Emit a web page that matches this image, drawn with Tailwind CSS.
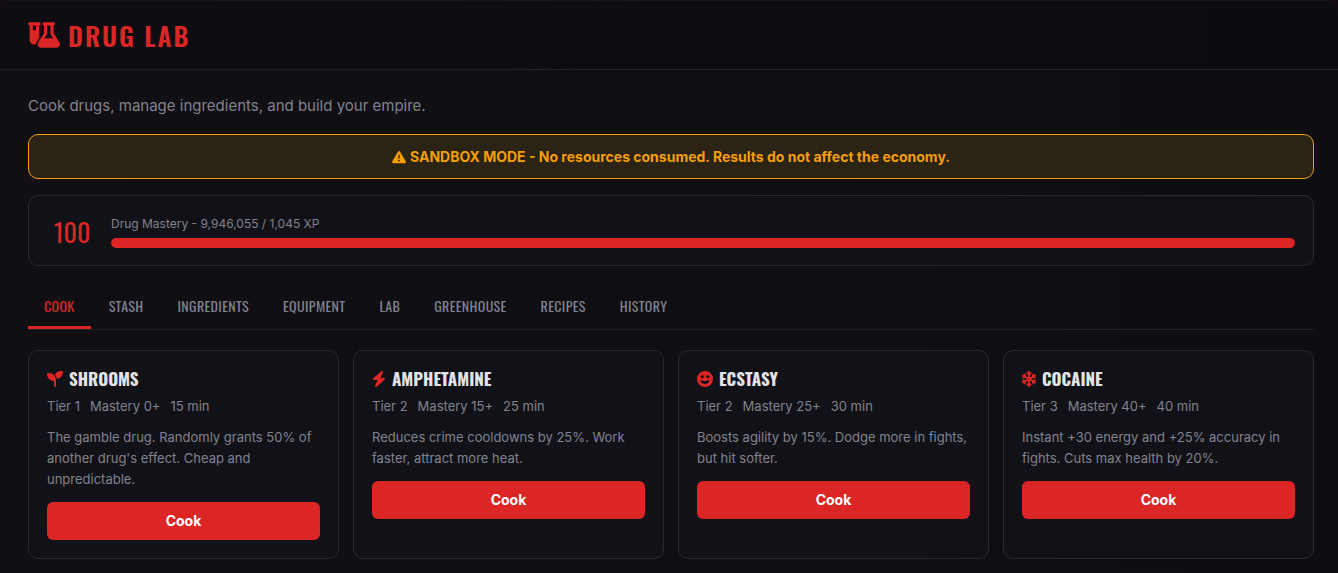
<!DOCTYPE html>
<html lang="en">
<head>
<meta charset="utf-8">
<meta name="viewport" content="width=device-width, initial-scale=1">
<title>Drug Lab</title>
<script src="https://cdn.jsdelivr.net/npm/@tailwindcss/browser@4"></script>
</head>
<body class="min-h-screen bg-[#150a10] font-['Inter',sans-serif] text-[#82828e]">
<svg class="hidden" aria-hidden="true">
  <symbol id="flask" viewBox="0 0 640 512"><path fill-rule="evenodd" d="M175 389.4c-9.8 16-15 34.3-15 53.1c-10 3.5-20.8 5.5-32 5.5c-53 0-96-43-96-96V64C14.3 64 0 49.7 0 32S14.3 0 32 0H96h64 64c17.7 0 32 14.3 32 32s-14.3 32-32 32V309.9l-49 79.6zM96 64v96h64V64H96zM352 0H480h32c17.7 0 32 14.3 32 32s-14.3 32-32 32V214.9L629.7 406.2c6.7 10.9 10.3 23.5 10.3 36.4c0 38.3-31.1 69.4-69.4 69.4H261.4c-38.3 0-69.4-31.1-69.4-69.4c0-12.8 3.6-25.4 10.3-36.4L320 214.9V64c-17.7 0-32-14.3-32-32s14.3-32 32-32h32zM384 64V224c0 5.9-1.6 11.7-4.7 16.8L330.5 320h171l-48.8-79.2c-3.1-5-4.7-10.8-4.7-16.8V64H384z"/></symbol>
  <symbol id="warning" viewBox="0 0 512 512"><path fill-rule="evenodd" d="M256 32c14.2 0 27.3 7.5 34.5 19.8l216 368c7.3 12.4 7.3 27.7 .2 40.1S486.3 480 472 480H40c-14.3 0-27.6-7.7-34.7-20.1s-7-27.8 .2-40.1l216-368C228.7 39.5 241.8 32 256 32zm0 128c-13.3 0-24 10.7-24 24V296c0 13.3 10.7 24 24 24s24-10.7 24-24V184c0-13.3-10.7-24-24-24zm32 224a32 32 0 1 0 -64 0 32 32 0 1 0 64 0z"/></symbol>
  <symbol id="seedling" viewBox="0 0 512 512"><path d="M512 32c0 113.6-84.6 207.5-194.2 222c-7.1-53.4-30.6-101.6-65.3-139.3C290.8 46.3 364 0 448 0h32c17.7 0 32 14.3 32 32zM0 96C0 78.3 14.3 64 32 64H64c123.7 0 224 100.3 224 224v32V480c0 17.7-14.3 32-32 32s-32-14.3-32-32V320C100.3 320 0 219.7 0 96z"/></symbol>
  <symbol id="bolt" viewBox="0 0 448 512"><path d="M349.4 44.6c5.9-13.7 1.5-29.7-10.6-38.5s-28.6-8-39.9 1.8l-256 224c-10 8.8-13.6 22.9-8.9 35.3S50.7 288 64 288H175.5L98.6 467.4c-5.9 13.7-1.5 29.7 10.6 38.5s28.6 8 39.9-1.8l256-224c10-8.8 13.6-22.9 8.9-35.3s-16.6-20.7-30-20.7H272.5L349.4 44.6z"/></symbol>
  <symbol id="grin" viewBox="0 0 512 512"><path fill-rule="evenodd" d="M256 0a256 256 0 1 1 0 512a256 256 0 1 1 0-512zM388 297c-39 12-84 20-132 20s-93-8-132-20c-8-3-17 4-14 12c19 60 77 107 146 107s127-47 146-107c3-8-6-15-14-12zM168 112l-21 43-47 7 34 33-8 47 42-22 42 22-8-47 34-33-47-7zM344 112l-21 43-47 7 34 33-8 47 42-22 42 22-8-47 34-33-47-7z"/></symbol>
  <symbol id="snow" viewBox="0 0 448 512"><path d="M224 0c17.7 0 32 14.3 32 32V62.1l15-15c9.4-9.4 24.6-9.4 33.9 0s9.4 24.6 0 33.9l-49 49v70.3l61.4-35.8 17.7-66.1c3.4-12.8 16.6-20.4 29.4-17s20.4 16.6 17 29.4l-5.2 19.3 23.6-13.8c15.3-8.9 34.9-3.7 43.8 11.5s3.8 34.9-11.5 43.8l-25.3 14.8 21.7 5.8c12.8 3.4 20.4 16.6 17 29.4s-16.6 20.4-29.4 17l-67.7-18.1L287.5 256l60.9 35.5 67.7-18.1c12.8-3.4 26 4.2 29.4 17s-4.2 26-17 29.4l-21.7 5.8 25.3 14.8c15.3 8.9 20.4 28.5 11.5 43.8s-28.5 20.4-43.8 11.5l-23.6-13.8 5.2 19.3c3.4 12.8-4.2 26-17 29.4s-26-4.2-29.4-17l-17.7-66.1L256 311.7v70.3l49 49c9.4 9.4 9.4 24.6 0 33.9s-24.6 9.4-33.9 0l-15-15V480c0 17.7-14.3 32-32 32s-32-14.3-32-32V449.9l-15 15c-9.4 9.4-24.6 9.4-33.9 0s-9.4-24.6 0-33.9l49-49V311.7l-61.4 35.8-17.7 66.1c-3.4 12.8-16.6 20.4-29.4 17s-20.4-16.6-17-29.4l5.2-19.3L48.1 395.6c-15.3 8.9-34.9 3.7-43.8-11.5s-3.7-34.9 11.5-43.8l25.3-14.8-21.7-5.8c-12.8-3.4-20.4-16.6-17-29.4s16.6-20.4 29.4-17l67.7 18.1L160.5 256 99.6 220.5 31.9 238.6c-12.8 3.4-26-4.2-29.4-17s4.2-26 17-29.4l21.7-5.8L15.9 171.6C.6 162.7-4.5 143.1 4.4 127.9s28.5-20.4 43.8-11.5l23.6 13.8-5.2-19.3c-3.4-12.8 4.2-26 17-29.4s26 4.2 29.4 17l17.7 66.1L192 200.3V129.9L143 81c-9.4-9.4-9.4-24.6 0-33.9s24.6-9.4 33.9 0l15 15V32c0-17.7 14.3-32 32-32z"/></symbol>
</svg>
<div class="min-h-screen overflow-hidden rounded-t-xl border-t border-[#16161d] bg-linear-to-r from-[#110f14] to-[#0d0e12]">
  <header class="border-b border-[#212128] bg-black/10 pr-6 pl-7">
    <h1 class="flex h-17 items-center gap-2 font-['Oswald',sans-serif] text-[26px] font-semibold tracking-[2px] text-[#dc2626] uppercase">
      <svg class="h-[26px] w-8 fill-current" aria-hidden="true"><use href="#flask"/></svg>Drug Lab
    </h1>
  </header>
  <main class="pt-6 pr-6 pb-3.5 pl-7">
    <p class="text-[15px] leading-6">Cook drugs, manage ingredients, and build your empire.</p>
    <div role="status" class="mt-4 flex h-[45px] items-center justify-center gap-1 rounded-[10px] border border-[#f59e0b] bg-[#2b2313] text-sm font-bold text-[#f59e0b]">
      <svg class="size-3.5 fill-current" aria-hidden="true"><use href="#warning"/></svg>
      <span>SANDBOX MODE - No resources consumed. Results do not affect the economy.</span>
    </div>
    <section class="mt-4 flex items-center rounded-[10px] border border-[#2a2a35] bg-[#111217] pt-[18px] pr-[18px] pb-[17px] pl-6">
      <div class="mr-5 w-[38px] text-center font-['Oswald',sans-serif] text-[26px] leading-[33px] text-[#dc2626]">100</div>
      <div class="flex-1">
        <div id="mastery" class="text-xs leading-5">Drug Mastery - 9,946,055 / 1,045 XP</div>
        <div role="progressbar" aria-labelledby="mastery" aria-valuenow="100" class="mt-1 h-2.5 rounded-full bg-[#dc2626]"></div>
      </div>
    </section>
    <nav class="mt-5 flex gap-0.5 border-b border-[#212128] font-['Oswald',sans-serif] text-sm tracking-wide">
      <button class="h-[43px] border-b-3 border-[#dc2626] px-4 text-[#dc2626]">COOK</button>
      <button class="h-[43px] border-b-3 border-transparent px-4">STASH</button>
      <button class="h-[43px] border-b-3 border-transparent px-4">INGREDIENTS</button>
      <button class="h-[43px] border-b-3 border-transparent px-4">EQUIPMENT</button>
      <button class="h-[43px] border-b-3 border-transparent px-4">LAB</button>
      <button class="h-[43px] border-b-3 border-transparent px-4">GREENHOUSE</button>
      <button class="h-[43px] border-b-3 border-transparent px-4">RECIPES</button>
      <button class="h-[43px] border-b-3 border-transparent px-4">HISTORY</button>
    </nav>
    <div class="mt-5 grid grid-cols-4 gap-3.5 text-[13px]">
      <article class="rounded-[10px] border border-[#2a2a35] bg-[#111217] p-[18px]">
        <h2 class="flex h-5 items-center gap-1.5 font-['Oswald',sans-serif] text-[17px] font-bold text-[#e4e4e8]"><svg class="size-4 fill-[#dc2626]" aria-hidden="true"><use href="#seedling"/></svg>SHROOMS</h2>
        <div class="mt-[7px] flex gap-2.5 leading-5"><span>Tier 1</span><span>Mastery 0+</span><span>15 min</span></div>
        <p class="mt-[11px] leading-[21px]">The gamble drug. Randomly grants 50% of another drug's effect. Cheap and unpredictable.</p>
        <button class="mt-3 h-[38px] w-full rounded-md bg-[#dc2626] text-sm font-bold text-white">Cook</button>
      </article>
      <article class="rounded-[10px] border border-[#2a2a35] bg-[#111217] p-[18px]">
        <h2 class="flex h-5 items-center gap-1.5 font-['Oswald',sans-serif] text-[17px] font-bold text-[#e4e4e8]"><svg class="h-4 w-3.5 fill-[#dc2626]" aria-hidden="true"><use href="#bolt"/></svg>AMPHETAMINE</h2>
        <div class="mt-[7px] flex gap-2.5 leading-5"><span>Tier 2</span><span>Mastery 15+</span><span>25 min</span></div>
        <p class="mt-[11px] leading-[21px]">Reduces crime cooldowns by 25%. Work faster, attract more heat.</p>
        <button class="mt-3 h-[38px] w-full rounded-md bg-[#dc2626] text-sm font-bold text-white">Cook</button>
      </article>
      <article class="rounded-[10px] border border-[#2a2a35] bg-[#111217] p-[18px]">
        <h2 class="flex h-5 items-center gap-1.5 font-['Oswald',sans-serif] text-[17px] font-bold text-[#e4e4e8]"><svg class="size-4 fill-[#dc2626]" aria-hidden="true"><use href="#grin"/></svg>ECSTASY</h2>
        <div class="mt-[7px] flex gap-2.5 leading-5"><span>Tier 2</span><span>Mastery 25+</span><span>30 min</span></div>
        <p class="mt-[11px] leading-[21px]">Boosts agility by 15%. Dodge more in fights, but hit softer.</p>
        <button class="mt-3 h-[38px] w-full rounded-md bg-[#dc2626] text-sm font-bold text-white">Cook</button>
      </article>
      <article class="rounded-[10px] border border-[#2a2a35] bg-[#111217] p-[18px]">
        <h2 class="flex h-5 items-center gap-1.5 font-['Oswald',sans-serif] text-[17px] font-bold text-[#e4e4e8]"><svg class="h-4 w-3.5 fill-[#dc2626]" aria-hidden="true"><use href="#snow"/></svg>COCAINE</h2>
        <div class="mt-[7px] flex gap-2.5 leading-5"><span>Tier 3</span><span>Mastery 40+</span><span>40 min</span></div>
        <p class="mt-[11px] leading-[21px]">Instant +30 energy and +25% accuracy in fights. Cuts max health by 20%.</p>
        <button class="mt-3 h-[38px] w-full rounded-md bg-[#dc2626] text-sm font-bold text-white">Cook</button>
      </article>
    </div>
  </main>
</div>
</body>
</html>
